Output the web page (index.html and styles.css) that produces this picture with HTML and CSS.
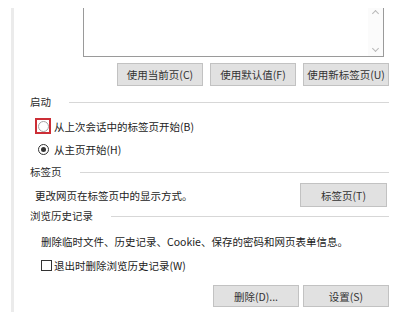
FILE: index.html
```html
<!DOCTYPE html>
<html lang="zh-CN">
<head>
  <meta charset="UTF-8">
  <meta name="viewport" content="width=device-width, initial-scale=1.0">
  <title>Internet 选项</title>
  <link rel="stylesheet" href="styles.css">
</head>
<body>
  <div id="options">
    <div id="home-pages">
      <div class="page-list"></div>
      <div class="scrollbar">
        <span class="arrow-box"><span class="arrow up"></span></span>
        <span class="arrow-box"><span class="arrow down"></span></span>
      </div>
    </div>
    <div class="actions home-actions">
      <button type="button">使用当前页(C)</button>
      <button type="button">使用默认值(F)</button>
      <button type="button">使用新标签页(U)</button>
    </div>

    <div class="group-title">启动</div>
    <div class="option first">
      <span class="mark highlight"><span class="radio"></span></span>从上次会话中的标签页开始(B)
    </div>
    <div class="option second">
      <span class="mark"><span class="radio checked"></span></span>从主页开始(H)
    </div>

    <div class="group-title tabs-title">标签页</div>
    <div class="tabs-row">
      <span>更改网页在标签页中的显示方式。</span>
      <button type="button">标签页(T)</button>
    </div>

    <div class="group-title history-title">浏览历史记录</div>
    <div class="history-info">删除临时文件、历史记录、Cookie、保存的密码和网页表单信息。</div>
    <div class="check-row">
      <span class="checkbox"></span>退出时删除浏览历史记录(W)
    </div>
    <div class="actions history-actions">
      <button type="button">删除(D)...</button>
      <button type="button">设置(S)</button>
    </div>
  </div>
</body>
</html>
```

FILE: styles.css
```css
body {
  margin: 0;
  background: #fff;
  font-family: "Noto Sans CJK SC", "Noto Sans", sans-serif;
  font-size: 10.5px;
  color: #222;
}

#options {
  margin: 8px 13px 0 11px;
  border-left: 3px solid #ebebeb;
  padding-left: 16px;
  min-height: 304px;
}

/* home page list box, top edge is cut off */
#home-pages {
  margin: 0 5px 0 53px;
  height: 49px;
  box-sizing: border-box;
  border: 1px solid #9a9a9a;
  border-top: none;
  display: flex;
}

#home-pages .page-list {
  flex: 1;
}

#home-pages .scrollbar {
  width: 15px;
  background: #fbfbfb;
  display: flex;
  flex-direction: column;
  justify-content: space-between;
  align-items: center;
  padding-bottom: 3px;
}

.arrow-box {
  width: 8px;
  height: 8px;
  display: flex;
  align-items: center;
  justify-content: center;
}

.arrow {
  width: 4px;
  height: 4px;
  border-top: 1px solid #b8b8b8;
  border-left: 1px solid #b8b8b8;
}

.arrow.up {
  transform: translateY(1px) rotate(45deg);
}

.arrow.down {
  transform: translateY(-1px) rotate(225deg);
}

button {
  font-family: inherit;
  font-size: 10.5px;
  color: #333;
  background: #e1e1e1;
  border: 1px solid #c2c2c2;
  padding: 0;
  width: 86px;
}

.actions {
  display: flex;
  justify-content: flex-end;
}

.home-actions {
  margin-top: 6px;
  gap: 7px;
}

.home-actions button {
  height: 23px;
}

.group-title {
  display: flex;
  align-items: center;
  gap: 18px;
  height: 16px;
  line-height: 16px;
  margin-top: 8px;
  color: #2a2a2a;
}

.group-title::after {
  content: '';
  flex: 1;
  height: 1px;
  background: #d7d7d7;
}

.option {
  display: flex;
  align-items: center;
  gap: 3px;
  height: 18px;
  padding-left: 5px;
}

.option.first {
  margin-top: 7px;
}

.option.second {
  margin-top: 5px;
}

.mark {
  width: 16px;
  height: 16px;
  box-sizing: border-box;
  display: flex;
  align-items: center;
  justify-content: center;
}

.mark.highlight {
  border: 2px solid #cc2e36;
}

.radio {
  width: 11px;
  height: 11px;
  box-sizing: border-box;
  border: 1px solid #a3a3a3;
  border-radius: 50%;
  display: flex;
  align-items: center;
  justify-content: center;
}

.radio.checked {
  border-color: #333;
}

.radio.checked::after {
  content: '';
  width: 5px;
  height: 5px;
  border-radius: 50%;
  background: #333;
}

.tabs-title {
  margin-top: 6px;
}

.tabs-row {
  margin-top: 3px;
  padding-left: 5px;
  display: flex;
  justify-content: space-between;
  align-items: center;
}

.tabs-row button {
  width: 87px;
  height: 24px;
  margin-right: 2px;
}

.history-title {
  margin-top: 1px;
}

.history-info {
  margin-top: 10px;
  padding-left: 11px;
  line-height: 16px;
}

.check-row {
  margin-top: 7px;
  padding-left: 11px;
  display: flex;
  align-items: center;
  gap: 2px;
  height: 16px;
}

.checkbox {
  width: 11px;
  height: 11px;
  box-sizing: border-box;
  border: 1px solid #333;
}

.history-actions {
  margin-top: 12px;
  gap: 4px;
}

.history-actions button {
  height: 22px;
}
```
